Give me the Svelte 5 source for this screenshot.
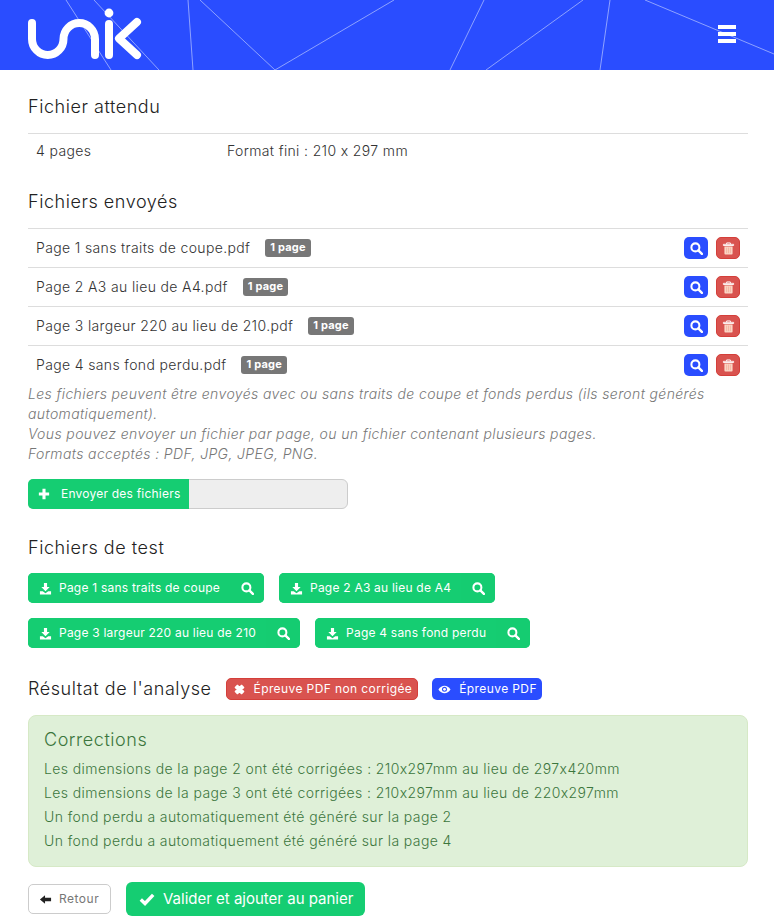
<script>
  const lines = [
    [66, 0, 111, 70], [94, 0, 159, 70], [188, 0, 193, 70], [200, 0, 275, 70],
    [275, 70, 394, 0], [484, 0, 450, 70], [583, 0, 486, 70], [610, 0, 600, 70], [645, 0, 774, 54]
  ];
  const files = [
    'Page 1 sans traits de coupe.pdf',
    'Page 2 A3 au lieu de A4.pdf',
    'Page 3 largeur 220 au lieu de 210.pdf',
    'Page 4 sans fond perdu.pdf'
  ];
  const tests = [
    ['Page 1 sans traits de coupe', 'Page 2 A3 au lieu de A4'],
    ['Page 3 largeur 220 au lieu de 210', 'Page 4 sans fond perdu']
  ];
  const corrections = [
    'Les dimensions de la page 2 ont été corrigées : 210x297mm au lieu de 297x420mm',
    'Les dimensions de la page 3 ont été corrigées : 210x297mm au lieu de 220x297mm',
    'Un fond perdu a automatiquement été généré sur la page 2',
    'Un fond perdu a automatiquement été généré sur la page 4'
  ];
</script>

{#snippet search()}
  <svg class="ico" viewBox="0 0 14 14"><circle cx="5.8" cy="5.8" r="4.3" fill="none" stroke="currentColor" stroke-width="2.2" /><path d="M9 9 12.800 12.800" stroke="currentColor" stroke-width="2.600" stroke-linecap="round" /></svg>
{/snippet}

{#snippet trash()}
  <svg class="ico" viewBox="0 0 14 14"><path d="M1.5 2.500h11v1.300h-11zM5 2.500V1h4v1.500" fill="none" stroke="#fff" stroke-width="1" /><path d="M2.600 4.800h8.800v7.600a1 1 0 0 1-1 1H3.600a1 1 0 0 1-1-1z" fill="#fbd5c5" /><path d="M5 6v6M7 6v6M9 6v6" stroke="#f0a58f" stroke-width=".7" /></svg>
{/snippet}

{#snippet download()}
  <svg class="ico" viewBox="0 0 14 14"><path d="M5.300 1h3.400v4.500h2.800L7 10 2.500 5.500h2.800zM1 10h3l3 2.200L10 10h3v3.500H1z" fill="currentColor" /></svg>
{/snippet}

<header>
  <svg class="lines" viewBox="0 0 774 70" aria-hidden="true">
    {#each lines as [x1, y1, x2, y2]}
      <line {x1} {y1} {x2} {y2} />
    {/each}
  </svg>
  <svg class="logo" viewBox="0 0 120 60" aria-label="unik">
    <path d="M5 23V39A15.750 16 0 0 0 36.500 39A15.750 16 0 0 1 68 39V55M82 24V55M110 22 92 38.500 110 55" />
    <circle cx="82" cy="13" r="4.400" />
  </svg>
  <button class="menu" aria-label="Menu"><span></span><span></span><span></span></button>
</header>

<main>
  <section class="expected">
    <h2>Fichier attendu</h2>
    <div class="row info">
      <span class="pages">4 pages</span>
      <span>Format fini : 210 x 297 mm</span>
    </div>
  </section>

  <section class="sent">
    <h2>Fichiers envoyés</h2>
    <ul>
      {#each files as file}
        <li class="row">
          <span class="name">{file}</span>
          <span class="tag">1 page</span>
          <span class="actions">
            <button class="mini blue" aria-label="Voir">{@render search()}</button>
            <button class="mini red" aria-label="Supprimer">{@render trash()}</button>
          </span>
        </li>
      {/each}
    </ul>
    <p class="help">
      Les fichiers peuvent être envoyés avec ou sans traits de coupe et fonds perdus (ils seront générés automatiquement).<br />
      Vous pouvez envoyer un fichier par page, ou un fichier contenant plusieurs pages.<br />
      Formats acceptés : PDF, JPG, JPEG, PNG.
    </p>
    <div class="upload">
      <button class="pick">
        <svg class="ico" viewBox="0 0 14 14"><path d="M5.200 1h3.600v4.200H13v3.600H8.800V13H5.200V8.800H1V5.200h4.200z" fill="currentColor" /></svg>
        Envoyer des fichiers
      </button>
    </div>
  </section>

  <section class="test">
    <h2>Fichiers de test</h2>
    {#each tests as pair}
      <div class="test-row">
        {#each pair as label}
          <div class="split">
            <button class="dl">{@render download()}{label}</button>
            <button class="view" aria-label="Voir">{@render search()}</button>
          </div>
        {/each}
      </div>
    {/each}
  </section>

  <section class="result">
    <div class="result-head">
      <h2>Résultat de l'analyse</h2>
      <button class="pill red">
        <svg class="ico" viewBox="0 0 14 14"><path d="M2.500 4.800 4.800 2.500 7 4.700l2.200-2.200 2.300 2.300L9.300 7l2.200 2.200-2.300 2.300L7 9.300l-2.200 2.200-2.300-2.300L4.700 7z" fill="currentColor" stroke="currentColor" stroke-width="1.400" stroke-linejoin="round" /></svg>
        Épreuve PDF non corrigée
      </button>
      <button class="pill blue">
        <svg class="ico" viewBox="0 0 14 14"><path d="M.5 7C2.300 4.300 4.500 3 7 3s4.700 1.300 6.500 4c-1.800 2.700-4 4-6.500 4S2.300 9.700.5 7z" fill="currentColor" /><circle cx="7" cy="6.800" r="2.700" fill="#2a4dff" /><circle cx="7" cy="6.800" r="1.500" fill="currentColor" /></svg>
        Épreuve PDF
      </button>
    </div>
    <div class="alert">
      <h3>Corrections</h3>
      {#each corrections as line}
        <p>{line}</p>
      {/each}
    </div>
  </section>

  <footer>
    <button class="back">
      <svg class="ico" viewBox="0 0 14 14"><path d="M1 7 6.500 2.300V5H13v4H6.500v2.700z" fill="currentColor" /></svg>
      <span>Retour</span>
    </button>
    <button class="validate">
      <svg class="ico" viewBox="0 0 16 14"><path d="M1.800 7.500 6 11.500 14.200 2.800" fill="none" stroke="currentColor" stroke-width="3.400" /></svg>
      Valider et ajouter au panier
    </button>
  </footer>
</main>

<style>
  :global(body) {
    margin: 0;
    background: #fff;
    color: #333;
    font-family: Inter, "Open Sans", sans-serif;
    font-size: 14px;
    font-weight: 300;
    line-height: 20px;
    letter-spacing: 0.36px;
    font-feature-settings: "calt" 0;
  }

  header {
    position: relative;
    height: 70px;
    background: #2a4dff;
    display: flex;
    align-items: flex-start;
    justify-content: space-between;
    padding: 0 38px 0 27px;
    overflow: hidden;
  }

  .lines {
    position: absolute;
    inset: 0;
    width: 774px;
    height: 70px;
  }

  .lines line {
    stroke: #8ea2ff;
    stroke-width: 1;
  }

  .logo {
    position: relative;
    width: 120px;
    height: 60px;
  }

  .logo path {
    fill: none;
    stroke: #fff;
    stroke-width: 8;
    stroke-linecap: round;
    stroke-linejoin: round;
  }

  .logo circle {
    fill: #fff;
  }

  button {
    font: inherit;
    font-weight: 400;
    letter-spacing: 0.22px;
    border: 0;
    padding: 0;
    color: #fff;
  }

  .menu {
    position: relative;
    width: 18px;
    margin-top: 25px;
    background: none;
    display: flex;
    flex-direction: column;
    gap: 3px;
  }

  .menu span {
    height: 4px;
    background: #fff;
  }

  main {
    padding: 0 26px 0 28px;
  }

  h2 {
    margin: 0;
    font-size: 18px;
    font-weight: 300;
    line-height: 26px;
    letter-spacing: 0.55px;
    color: #222;
  }

  .row {
    display: flex;
    align-items: center;
    border-top: 1px solid #ddd;
    padding-left: 8px;
  }

  .expected {
    padding-top: 24px;
  }

  .info {
    margin-top: 13px;
    height: 34px;
    padding-bottom: 1px;
  }

  .pages {
    width: 191px;
  }

  .sent {
    padding-top: 20px;
  }

  ul {
    list-style: none;
    margin: 13px 0 0;
    padding: 0;
  }

  li.row {
    height: 38px;
    padding-right: 8px;
  }

  .tag {
    margin-left: 15px;
    padding: 0 5px;
    height: 18px;
    background: #777;
    color: #fff;
    border-radius: 3px;
    font-size: 11px;
    font-weight: 700;
    letter-spacing: 0.2px;
    line-height: 17px;
  }

  .actions {
    margin-left: auto;
    display: flex;
    gap: 8px;
  }

  .mini {
    width: 24px;
    height: 22px;
    border-radius: 5px;
    display: grid;
    place-items: center;
  }

  .ico {
    width: 12px;
    height: 12px;
    flex: none;
  }

  .mini .ico {
    width: 13px;
    height: 13px;
  }

  .blue {
    background: #2a4dff;
  }

  .red {
    background: #d9534f;
    border: 1px solid #d43f3a;
  }

  .help {
    margin: 0;
    color: #777;
    font-style: italic;
    letter-spacing: 0.38px;
  }

  .upload {
    margin-top: 15px;
    width: 320px;
    height: 30px;
    box-sizing: border-box;
    background: #eee;
    border: 1px solid #ccc;
    border-radius: 6px;
    display: flex;
  }

  .pick {
    margin: -1px;
    width: 161px;
    height: 30px;
    background: #15cd72;
    border-radius: 5px 0 0 5px;
    font-size: 12px;
    display: flex;
    align-items: center;
    gap: 11px;
    padding-left: 10px;
  }

  .test {
    padding-top: 26px;
  }

  .test-row {
    display: flex;
    gap: 15px;
    margin-top: 15px;
  }

  .test h2 + .test-row {
    margin-top: 12px;
  }

  .split {
    display: flex;
    height: 30px;
    border-radius: 5px;
    overflow: hidden;
    background: #15cd72;
  }

  .dl {
    background: #15cd72;
    font-size: 12px;
    display: flex;
    align-items: center;
    gap: 7px;
    padding: 0 10px 0 11px;
  }

  .dl .ico {
    width: 13px;
    height: 13px;
  }

  .view {
    width: 34px;
    background: #15cc71;
    display: grid;
    place-items: center;
  }

  .view .ico {
    width: 13px;
    height: 13px;
  }

  .result {
    padding-top: 30px;
  }

  .result-head {
    display: flex;
    align-items: center;
    gap: 14px;
    height: 22px;
  }

  .pill {
    height: 22px;
    box-sizing: border-box;
    border-radius: 5px;
    font-size: 12px;
    letter-spacing: 0.4px;
    display: flex;
    align-items: center;
    gap: 8px;
    padding: 0 5px 0 6px;
  }

  .pill .ico {
    width: 13px;
    height: 13px;
  }

  .pill.blue {
    border: 0;
  }

  .alert {
    margin-top: 15px;
    height: 152px;
    box-sizing: border-box;
    background: #dff0d8;
    border: 1px solid #d6e9c6;
    border-radius: 8px;
    color: #3c763d;
    padding: 11px 15px;
  }

  h3 {
    margin: 0 0 4px;
    font-size: 18px;
    font-weight: 300;
    line-height: 26px;
    letter-spacing: 0.55px;
  }

  .alert p {
    margin: 0;
    line-height: 24px;
    letter-spacing: 0.4px;
  }

  footer {
    display: flex;
    align-items: center;
    gap: 15px;
    margin-top: 15px;
  }

  .back {
    width: 83px;
    height: 30px;
    background: #fff;
    border: 1px solid #ccc;
    border-radius: 5px;
    color: #222;
    font-size: 12px;
    letter-spacing: 0.5px;
    display: flex;
    align-items: center;
    gap: 7px;
    padding-left: 10px;
  }

  .back .ico {
    width: 13px;
    height: 13px;
  }

  .back span {
    color: #777;
  }

  .validate {
    width: 239px;
    height: 34px;
    background: #15cd72;
    border-radius: 6px;
    font-size: 15px;
    letter-spacing: 0;
    display: flex;
    align-items: center;
    gap: 8px;
    padding-left: 13px;
  }

  .validate .ico {
    width: 16px;
    height: 14px;
  }
</style>
